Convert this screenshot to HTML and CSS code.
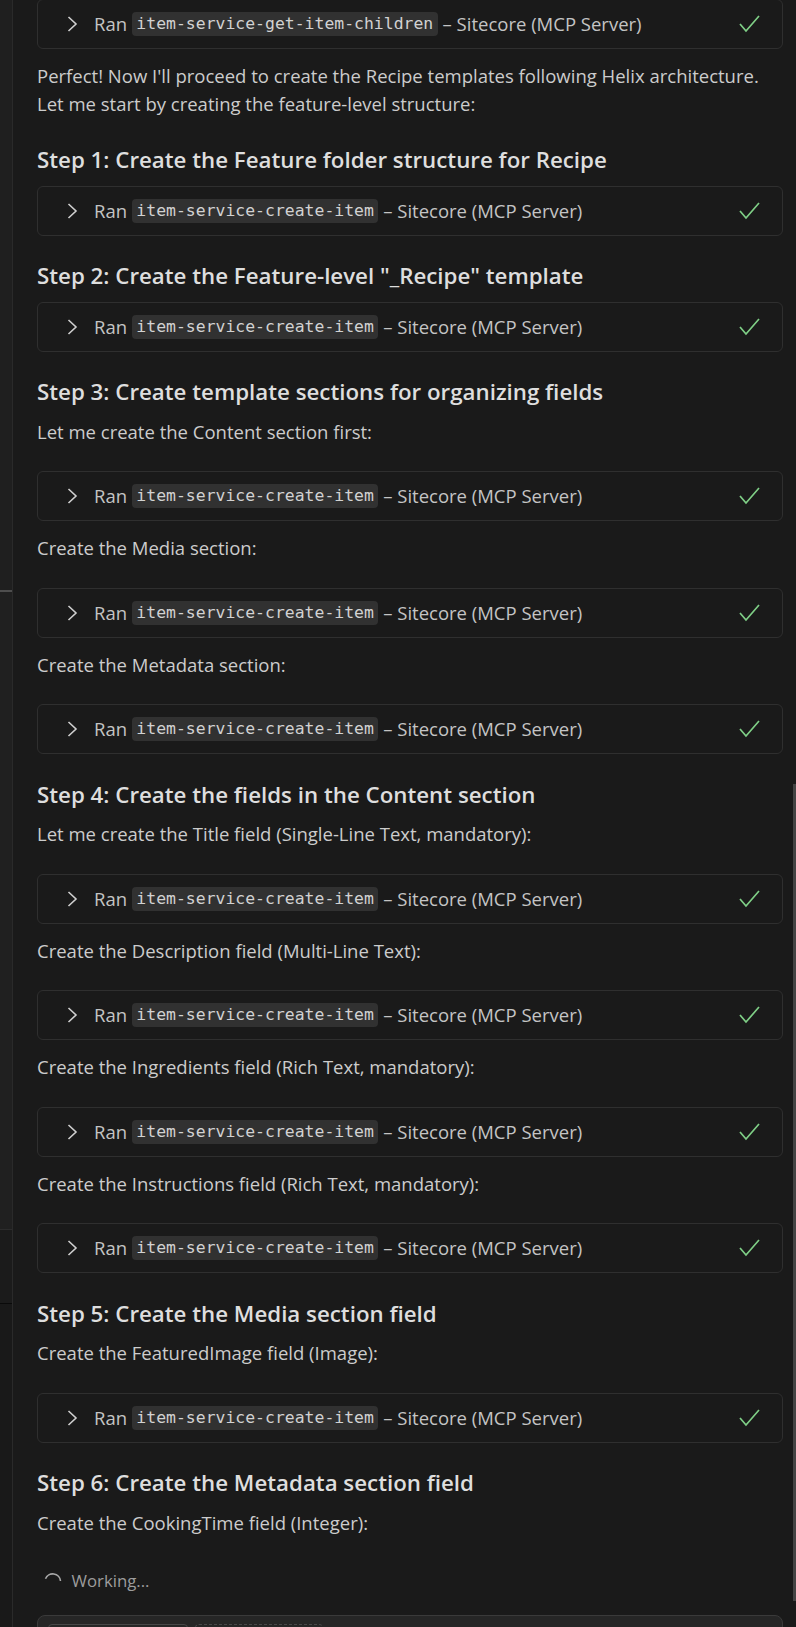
FILE: index.html
```html
<!DOCTYPE html>
<html lang="en">
<head>
	<meta charset="utf-8">
	<title>Chat</title>
	<link rel="stylesheet" href="styles.css">
</head>
<body>
<div class="app">
	<div class="side">
		<div class="side-top"></div>
		<div class="side-tick"></div>
		<div class="side-mid"></div>
		<div class="side-low"></div>
		<div class="side-rest"></div>
	</div>

	<main class="chat">
		<div class="tool first">
			<svg class="chev" width="12" height="16" viewBox="0 0 12 16"><polyline points="2.5,1 10,8 2.5,15"/></svg>
			<span class="label">Ran <code>item-service-get-item-children</code> – Sitecore (MCP Server)</span>
			<svg class="check" width="22" height="18" viewBox="0 0 22 18"><polyline points="2,9 8,16 21,1"/></svg>
		</div>

		<p class="intro">Perfect! Now I'll proceed to create the Recipe templates following Helix architecture.<br>Let me start by creating the feature-level structure:</p>

		<h3>Step 1: Create the Feature folder structure for Recipe</h3>
		<div class="tool">
			<svg class="chev" width="12" height="16" viewBox="0 0 12 16"><polyline points="2.5,1 10,8 2.5,15"/></svg>
			<span class="label">Ran <code>item-service-create-item</code> – Sitecore (MCP Server)</span>
			<svg class="check" width="22" height="18" viewBox="0 0 22 18"><polyline points="2,9 8,16 21,1"/></svg>
		</div>

		<h3>Step 2: Create the Feature-level "_Recipe" template</h3>
		<div class="tool">
			<svg class="chev" width="12" height="16" viewBox="0 0 12 16"><polyline points="2.5,1 10,8 2.5,15"/></svg>
			<span class="label">Ran <code>item-service-create-item</code> – Sitecore (MCP Server)</span>
			<svg class="check" width="22" height="18" viewBox="0 0 22 18"><polyline points="2,9 8,16 21,1"/></svg>
		</div>

		<h3>Step 3: Create template sections for organizing fields</h3>
		<p>Let me create the Content section first:</p>
		<div class="tool">
			<svg class="chev" width="12" height="16" viewBox="0 0 12 16"><polyline points="2.5,1 10,8 2.5,15"/></svg>
			<span class="label">Ran <code>item-service-create-item</code> – Sitecore (MCP Server)</span>
			<svg class="check" width="22" height="18" viewBox="0 0 22 18"><polyline points="2,9 8,16 21,1"/></svg>
		</div>

		<p>Create the Media section:</p>
		<div class="tool">
			<svg class="chev" width="12" height="16" viewBox="0 0 12 16"><polyline points="2.5,1 10,8 2.5,15"/></svg>
			<span class="label">Ran <code>item-service-create-item</code> – Sitecore (MCP Server)</span>
			<svg class="check" width="22" height="18" viewBox="0 0 22 18"><polyline points="2,9 8,16 21,1"/></svg>
		</div>

		<p>Create the Metadata section:</p>
		<div class="tool">
			<svg class="chev" width="12" height="16" viewBox="0 0 12 16"><polyline points="2.5,1 10,8 2.5,15"/></svg>
			<span class="label">Ran <code>item-service-create-item</code> – Sitecore (MCP Server)</span>
			<svg class="check" width="22" height="18" viewBox="0 0 22 18"><polyline points="2,9 8,16 21,1"/></svg>
		</div>

		<h3>Step 4: Create the fields in the Content section</h3>
		<p>Let me create the Title field (Single-Line Text, mandatory):</p>
		<div class="tool">
			<svg class="chev" width="12" height="16" viewBox="0 0 12 16"><polyline points="2.5,1 10,8 2.5,15"/></svg>
			<span class="label">Ran <code>item-service-create-item</code> – Sitecore (MCP Server)</span>
			<svg class="check" width="22" height="18" viewBox="0 0 22 18"><polyline points="2,9 8,16 21,1"/></svg>
		</div>

		<p>Create the Description field (Multi-Line Text):</p>
		<div class="tool">
			<svg class="chev" width="12" height="16" viewBox="0 0 12 16"><polyline points="2.5,1 10,8 2.5,15"/></svg>
			<span class="label">Ran <code>item-service-create-item</code> – Sitecore (MCP Server)</span>
			<svg class="check" width="22" height="18" viewBox="0 0 22 18"><polyline points="2,9 8,16 21,1"/></svg>
		</div>

		<p>Create the Ingredients field (Rich Text, mandatory):</p>
		<div class="tool">
			<svg class="chev" width="12" height="16" viewBox="0 0 12 16"><polyline points="2.5,1 10,8 2.5,15"/></svg>
			<span class="label">Ran <code>item-service-create-item</code> – Sitecore (MCP Server)</span>
			<svg class="check" width="22" height="18" viewBox="0 0 22 18"><polyline points="2,9 8,16 21,1"/></svg>
		</div>

		<p>Create the Instructions field (Rich Text, mandatory):</p>
		<div class="tool">
			<svg class="chev" width="12" height="16" viewBox="0 0 12 16"><polyline points="2.5,1 10,8 2.5,15"/></svg>
			<span class="label">Ran <code>item-service-create-item</code> – Sitecore (MCP Server)</span>
			<svg class="check" width="22" height="18" viewBox="0 0 22 18"><polyline points="2,9 8,16 21,1"/></svg>
		</div>

		<h3>Step 5: Create the Media section field</h3>
		<p>Create the FeaturedImage field (Image):</p>
		<div class="tool">
			<svg class="chev" width="12" height="16" viewBox="0 0 12 16"><polyline points="2.5,1 10,8 2.5,15"/></svg>
			<span class="label">Ran <code>item-service-create-item</code> – Sitecore (MCP Server)</span>
			<svg class="check" width="22" height="18" viewBox="0 0 22 18"><polyline points="2,9 8,16 21,1"/></svg>
		</div>

		<h3>Step 6: Create the Metadata section field</h3>
		<p>Create the CookingTime field (Integer):</p>

		<div class="working">
			<svg class="spinner" width="18" height="18" viewBox="0 0 18 18"><path d="M1.5 6.8 A7.8 7.8 0 0 1 16.5 9"/></svg>
			<span>Working...</span>
		</div>

		<div class="input">
			<div class="chip"></div>
			<div class="chip dashed"></div>
		</div>
	</main>

	<div class="scrollbar"></div>
</div>
</body>
</html>
```

FILE: styles.css
```css
body {
	margin: 0;
	background: #1a1a1a;
}

.app {
	position: relative;
	display: flex;
	height: 1627px;
	overflow: hidden;
	background: #1a1a1a;
}

/* thin strip of the neighbouring panel */
.side {
	display: flex;
	flex-direction: column;
	width: 12px;
	flex: none;
	border-right: 1px solid #2a2a2a;
}

.side-top {
	height: 590px;
	background: #1f1f1f;
}

.side-tick {
	height: 2px;
	background: #4e4e4e;
}

.side-mid {
	height: 637px;
	background: #202020;
	border-bottom: 1px solid #2c2c2c;
}

.side-low {
	height: 73px;
	background: #1b1b1b;
	border-bottom: 1px solid #0a0a0a;
}

.side-rest {
	flex: 1;
	background: #191919;
}

.chat {
	flex: 1;
	min-width: 0;
	padding: 0 13px 0 24px;
	font-family: "Open Sans", sans-serif;
	font-size: 18.5px;
	color: #cccccc;
}

.chat p {
	margin: 0 0 25.5px;
	line-height: 28px;
}

.chat p.intro {
	margin-bottom: 27px;
}

.chat h3 {
	margin: 25.5px 0 10.5px;
	font-size: 22.3px;
	font-weight: 600;
	line-height: 30px;
	color: #dedede;
}

/* collapsed tool call row */
.tool {
	display: flex;
	align-items: center;
	box-sizing: border-box;
	height: 50px;
	margin: 0 0 13px;
	padding: 0 22px 0 28px;
	border: 1px solid #2f2f2f;
	border-radius: 6px;
	background: #1a1a1a;
}

.tool.first {
	margin-top: -1px;
}

.chev {
	flex: none;
	margin-right: 16px;
}

.chev polyline {
	fill: none;
	stroke: #cfcfcf;
	stroke-width: 1.6;
}

.label {
	color: #c4c4c4;
	white-space: nowrap;
	line-height: 24px;
}

.label code {
	display: inline-block;
	padding: 0 4.5px;
	border-radius: 4px;
	background: #313131;
	color: #d2d2d2;
	font-family: "DejaVu Sans Mono", monospace;
	font-size: 16.45px;
	line-height: 24px;
	vertical-align: top;
}

.check {
	flex: none;
	margin-left: auto;
}

.check polyline {
	fill: none;
	stroke: #7fcf86;
	stroke-width: 1.7;
}

.working {
	display: flex;
	align-items: center;
	height: 24px;
	margin: 32px 0 22px;
	padding-left: 6.5px;
	color: #9d9d9d;
	font-size: 16.75px;
}

.spinner {
	flex: none;
	margin-right: 10px;
}

.spinner path {
	fill: none;
	stroke: #a8a8a8;
	stroke-width: 1.6;
}

.input {
	display: flex;
	gap: 7px;
	height: 80px;
	padding: 8px 10px;
	border: 1px solid #3a3a3a;
	border-radius: 8px;
	background: #262626;
}

.chip {
	width: 138px;
	height: 24px;
	border: 1px solid #474747;
	border-radius: 4px;
}

.chip.dashed {
	width: 126px;
	border-style: dashed;
}

.scrollbar {
	position: absolute;
	top: 784px;
	right: 0;
	width: 3px;
	height: 817px;
	background: #444444;
}
```
